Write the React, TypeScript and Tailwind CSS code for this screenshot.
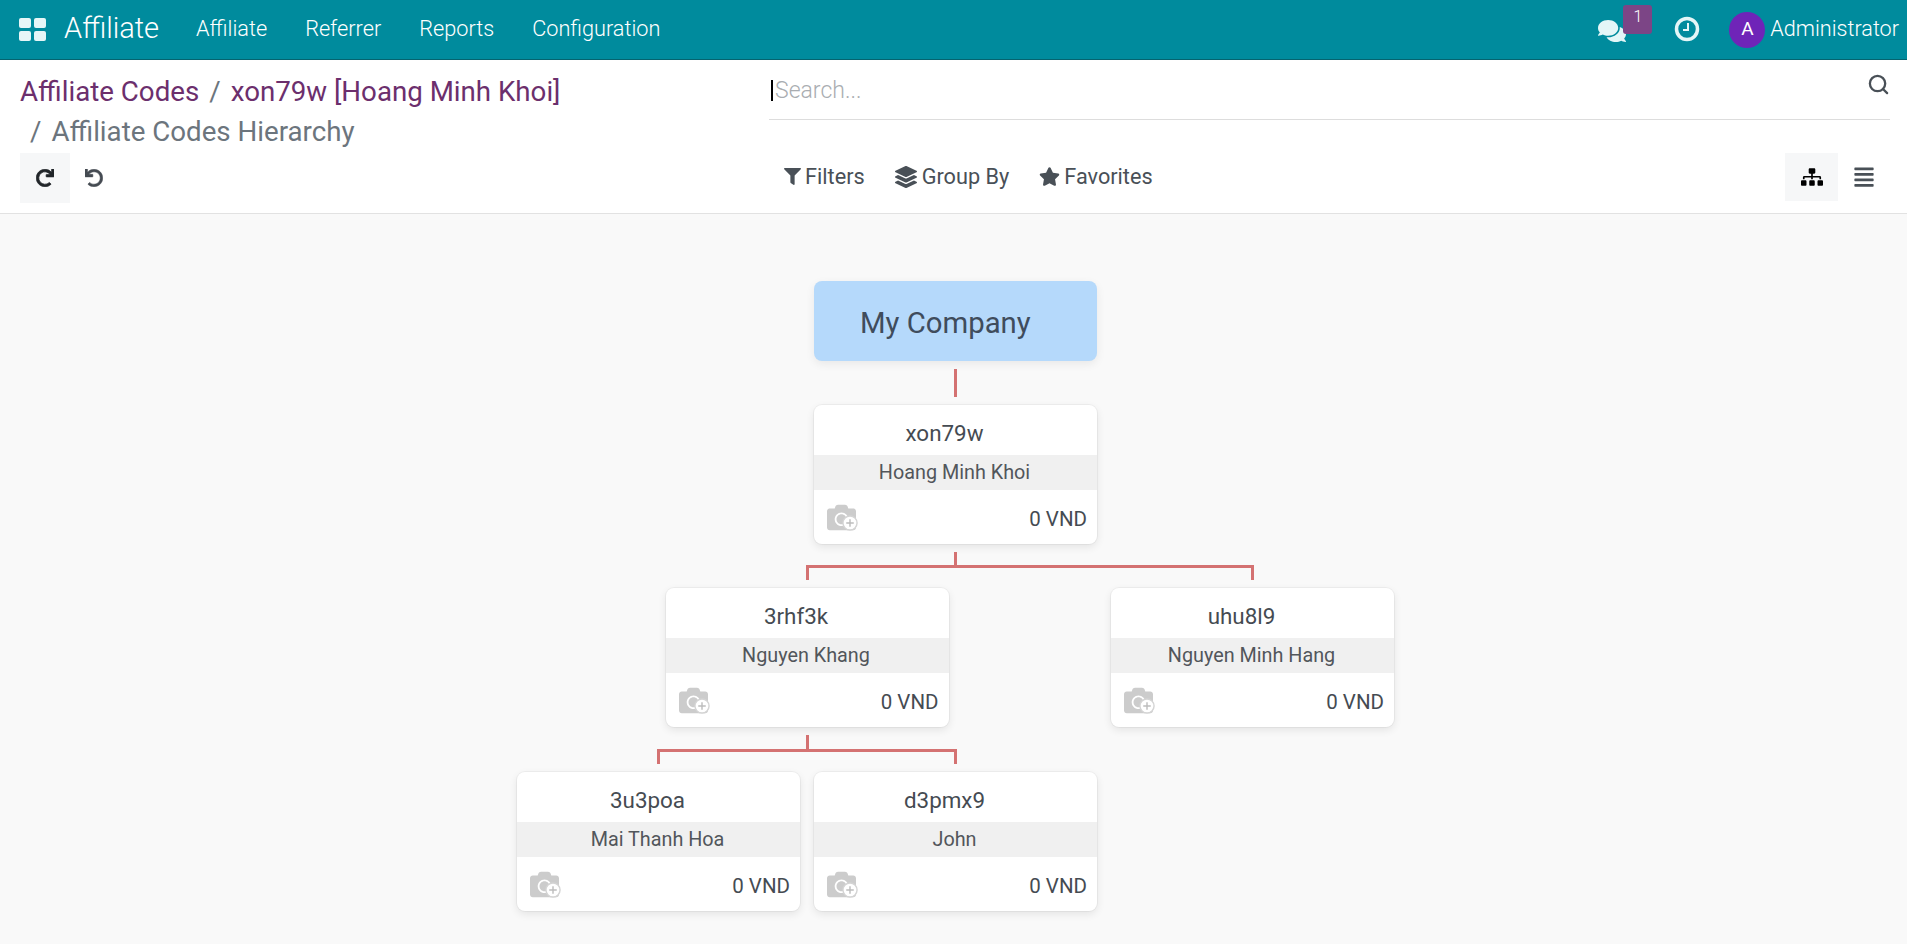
import { FaComments, FaFilter, FaLayerGroup, FaStar, FaRedo, FaUndo, FaSitemap, FaAlignJustify, FaCamera } from "react-icons/fa";
import { Search } from "lucide-react";

const stroke = "border-[#d47272]";

function Cam() {
  return (
    <span className="relative -mt-[2px] block h-[26px] w-[30px] text-[#cccccc]">
      <FaCamera className="absolute left-0 top-[-3px]" size={29} />
      <svg width="16" height="16" viewBox="0 0 17 17" className="absolute left-[15px] top-[9px]">
        <circle cx="8.5" cy="8.5" r="7.5" fill="#ffffff" stroke="#d4d4d4" strokeWidth="1.5" />
        <path d="M8.5 4.5v8M4.5 8.5h8" stroke="#bdbdbd" strokeWidth="1.5" />
      </svg>
    </span>
  );
}

function Card({ code, name }: { code: string; name: string }) {
  return (
    <div className="flex h-[139px] w-[283px] flex-col rounded-lg bg-white shadow-[0_0_0_1px_rgba(0,0,0,0.04),0_3px_9px_rgba(0,0,0,0.09)]">
      <div className="flex h-[50px] items-center justify-center pr-[22px] pt-[7px] text-[22.4px] text-[#454b52]">{code}</div>
      <div className="flex h-[35px] items-center justify-center bg-[#f0f0f0] pr-[2px] text-[19.8px] text-[#52565b]">{name}</div>
      <div className="flex flex-1 items-center justify-between pl-[13px] pr-[10px] pt-[5px]">
        <Cam />
        <span className="text-[20.5px] text-[#454b52]">0 VND</span>
      </div>
    </div>
  );
}

function Branch({ first, last, flush, children }: { first: boolean; last: boolean; flush?: boolean; children: React.ReactNode }) {
  return (
    <div className="flex flex-col items-center">
      <div className="flex h-[15px] w-full">
        <div className={first ? "h-full flex-1" : `h-full flex-1 border-t-[3px] ${stroke}`} />
        <div className={last ? `h-full flex-1 border-l-[3px] ${stroke}` : `h-full flex-1 border-l-[3px] border-t-[3px] ${stroke}`} />
      </div>
      <div className={flush ? "pt-2" : "px-[7px] pt-2"}>{children}</div>
    </div>
  );
}

function Stub({ tall }: { tall?: boolean }) {
  return <div className={tall ? `mt-2 h-[14px] w-0 border-l-[3px] ${stroke}` : `mt-2 h-[13px] w-0 border-l-[3px] ${stroke}`} />;
}

export default function App() {
  return (
    <div className="flex h-[944px] flex-col overflow-hidden bg-[#f9f9f9] font-['Roboto',sans-serif]">
      <header className="flex h-[60px] shrink-0 items-center border-b border-[#05636f] bg-[#008b9d] pl-[19px] pr-[8px] text-white">
        <svg width="28" height="24" viewBox="0 0 28 24" className="mr-[17px]" fill="#e6f6f7">
          <rect x="0" y="0" width="12" height="10" rx="2" />
          <rect x="15" y="0" width="12" height="10" rx="2" />
          <rect x="0" y="13" width="12" height="10" rx="2" />
          <rect x="15" y="13" width="12" height="10" rx="2" />
        </svg>
        <span className="-mt-[2px] mr-[37px] text-[29px] font-light">Affiliate</span>
        <nav className="-mt-[1px] flex gap-[38px] text-[21.7px] font-light">
          <span>Affiliate</span>
          <span>Referrer</span>
          <span>Reports</span>
          <span>Configuration</span>
        </nav>
        <div className="ml-auto flex items-center">
          <span className="relative mr-[48px] mt-[2px] block">
            <FaComments size={28} className="text-[#e4f6f7]" />
            <span className="absolute left-[25px] top-[-12px] flex h-[29px] w-[29px] justify-center rounded-[3px] bg-[#7c4586] text-[16px] font-light leading-[24px]">1</span>
          </span>
          <svg width="26" height="26" viewBox="0 0 26 26" fill="none" stroke="#e4f6f7" className="-mt-[2px] mr-[29px]">
            <circle cx="13" cy="13" r="10.5" strokeWidth="3.5" />
            <path d="M14 7v7H9" strokeWidth="2" />
          </svg>
          <span className="mr-[5px] flex h-9 w-9 items-center justify-center rounded-full bg-[#6f24b8] text-[19px]">A</span>
          <span className="-mt-[1px] text-[21.6px] font-light">Administrator</span>
        </div>
      </header>

      <section className="flex h-[154px] shrink-0 border-b border-[#e2e2e2] bg-white">
        <div className="flex w-[769px] shrink-0 flex-col pl-5">
          <div className="mt-[11px] flex h-[41px] items-center text-[27.7px] text-[#6c2f6d]">
            <span>Affiliate Codes</span>
            <span className="mx-[10px] text-[#6c757d]">/</span>
            <span>xon79w [Hoang Minh Khoi]</span>
          </div>
          <div className="-mt-px mb-px flex h-[41px] items-center pl-[10px] text-[27.7px] text-[#6c757d]">
            <span className="mr-[10px]">/</span>
            <span>Affiliate Codes Hierarchy</span>
          </div>
          <div className="flex">
            <button className="flex h-[50px] w-[50px] items-center justify-center bg-[#f6f7f8] text-[#212529]">
              <FaRedo size={18} stroke="currentColor" strokeWidth={20} />
            </button>
            <button className="flex h-[50px] w-[47px] items-center justify-center text-[#454b52]">
              <FaUndo size={18} stroke="currentColor" strokeWidth={15} />
            </button>
          </div>
        </div>

        <div className="flex min-w-0 flex-1 flex-col pr-[17px]">
          <div className="relative mt-[1px] flex h-[59px] items-center border-b border-[#dddddd] pl-[6px] pt-[2px] text-[23px] font-light text-[#a9adb1]">
            <span className="absolute left-[2px] top-[19px] h-[21px] w-[2px] bg-black" />
            <span>Search...</span>
            <Search size={23} className="absolute right-0 top-[12px] text-[#495057]" strokeWidth={2.4} />
          </div>
          <div className="mt-[33px] flex items-center text-[21.7px] text-[#495057]">
            <span className="ml-[15px] flex items-center gap-[4px]"><FaFilter size={17} />Filters</span>
            <span className="ml-[30px] flex items-center gap-[5px]"><FaLayerGroup size={22} />Group By</span>
            <span className="ml-[30px] flex items-center gap-[4px]"><FaStar size={21} />Favorites</span>
            <span className="ml-auto flex">
              <span className="flex h-[48px] w-[53px] items-center justify-center bg-[#f6f7f8] text-black"><FaSitemap size={22} /></span>
              <span className="flex h-[48px] w-[52px] items-center justify-center text-[#495057]"><FaAlignJustify size={22} /></span>
            </span>
          </div>
        </div>
      </section>

      <main className="flex flex-1 flex-col items-center pl-[4px] pt-[67px]">
        <div className="flex flex-col items-center">
          <div className="flex h-[80px] w-[283px] items-center rounded-lg bg-[#b5d9fb] pl-[46px] pt-[5px] text-[29.3px] text-[#3f4c5c] shadow-[0_3px_10px_rgba(0,0,0,0.07)]">My Company</div>
          <div className={`mt-2 h-[28px] w-0 border-l-[3px] ${stroke}`} />
          <div className="pt-2"><Card code="xon79w" name="Hoang Minh Khoi" /></div>
          <Stub />
          <div className="flex">
            <Branch first last={false} flush>
              <div className="flex flex-col items-center">
                <Card code="3rhf3k" name="Nguyen Khang" />
                <Stub tall />
                <div className="flex">
                  <Branch first last={false}><Card code="3u3poa" name="Mai Thanh Hoa" /></Branch>
                  <Branch first={false} last><Card code="d3pmx9" name="John" /></Branch>
                </div>
              </div>
            </Branch>
            <Branch first={false} last><Card code="uhu8l9" name="Nguyen Minh Hang" /></Branch>
          </div>
        </div>
      </main>
    </div>
  );
}
